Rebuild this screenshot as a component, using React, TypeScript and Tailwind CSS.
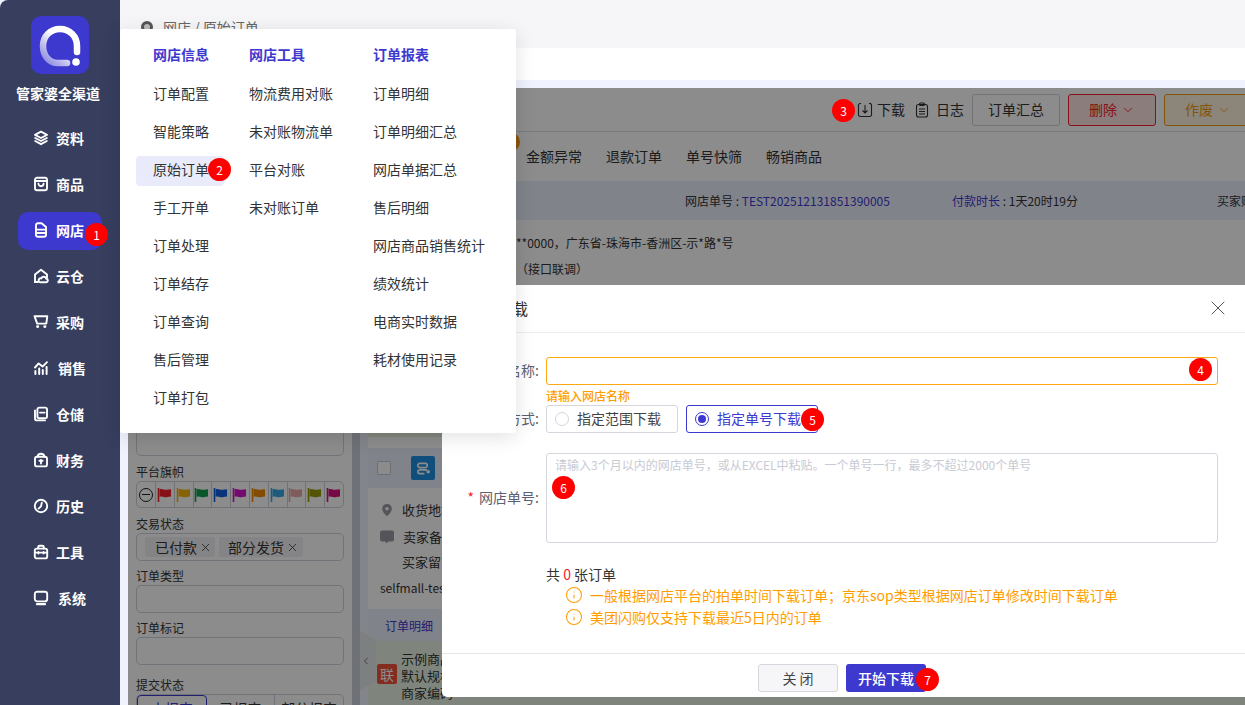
import type { ReactNode } from 'react';
import { ChevronDown, ChevronLeft, Info, X } from 'lucide-react';

const Glyph = ({ children }: { children: ReactNode }) => (
  <svg viewBox="0 0 16 16" className="h-4 w-4 shrink-0" fill="none" stroke="currentColor" strokeWidth="1.900" strokeLinecap="round" strokeLinejoin="round">
    {children}
  </svg>
);

const navItems: { label: string; gap: string; icon: ReactNode }[] = [
  { label: '资料', gap: 'gap-[7px]', icon: <path d="M8 1.600 14 4.800 8 8 2 4.800ZM2.200 8 8 11l5.800-3M2.200 11 8 14.200l5.800-3.200" /> },
  { label: '商品', gap: 'gap-[7px]', icon: <><rect x="2" y="1.800" width="12" height="12.400" rx="2" /><path d="M2 5h12M5.400 7.600a2.600 2.600 0 0 0 5.200 0" /></> },
  { label: '网店', gap: 'gap-[7px]', icon: <><path d="M3 3.200a2 2 0 0 1 2-2h3.600L13 5v7.800a2 2 0 0 1-2 2H5a2 2 0 0 1-2-2Z" /><path d="M3 7.600h10M3 11h10" /></> },
  { label: '云仓', gap: 'gap-[7px]', icon: <><path d="M2 14V6.600L8 1.800l6 4.800v3" /><path d="M2 14h3M7 14.200h6a1.700 1.700 0 0 0 .3-3.400 2.600 2.600 0 0 0-5-.4A1.900 1.900 0 0 0 7 14.200Z" /></> },
  { label: '采购', gap: 'gap-[7px]', icon: <><path d="M1.500 2.200h12.800l-1 7.400H4.200Z" /><path d="M4.400 12.600h.5M11.600 12.600h.5" strokeWidth="2.600" /></> },
  { label: '销售', gap: 'gap-[9px]', icon: <><path d="M2 7.500 5.600 3.400l4 3.200 4.400-4.400" /><path d="M2.400 14v-3M6.200 14V8.600M9.800 14v-4M13.600 14V7" strokeWidth="2" /></> },
  { label: '仓储', gap: 'gap-[7px]', icon: <><rect x="4.400" y="1.600" width="9.600" height="10.600" rx="1.800" /><path d="M2 4.400v8a2 2 0 0 0 2 2h8M7 6.600h4.600" /></> },
  { label: '财务', gap: 'gap-[7px]', icon: <><rect x="2" y="4.800" width="12" height="9.600" rx="2" /><path d="M4.600 4.600C4.800 2.600 6 1.800 8 1.800s3.200.8 3.400 2.800M8 8v3.600M6.400 8.800h3.200" /></> },
  { label: '历史', gap: 'gap-[7px]', icon: <><circle cx="8" cy="8" r="6.200" /><path d="M8.800 4.600 8 8.400l-2.400 2.200" /></> },
  { label: '工具', gap: 'gap-[7px]', icon: <><rect x="1.800" y="4.600" width="12.400" height="9.800" rx="2" /><path d="M5.200 4.400V3.200a1.400 1.400 0 0 1 1.400-1.400h2.800a1.400 1.400 0 0 1 1.400 1.400v1.200M1.800 8.600h12.400M5.400 8v1.600M10.600 8v1.600" /></> },
  { label: '系统', gap: 'gap-[9px]', icon: <><rect x="1.800" y="1.800" width="12.400" height="9.600" rx="2.400" /><path d="M4 14.200h8" strokeWidth="2.200" /></> },
];

const menuColumns = [
  { title: '网店信息', width: 'w-[96px]', rows: ['订单配置', '智能策略', '原始订单', '手工开单', '订单处理', '订单结存', '订单查询', '售后管理', '订单打包'] },
  { title: '网店工具', width: 'w-[124px]', rows: ['物流费用对账', '未对账物流单', '平台对账', '未对账订单'] },
  { title: '订单报表', width: 'w-[143px]', rows: ['订单明细', '订单明细汇总', '网店单据汇总', '售后明细', '网店商品销售统计', '绩效统计', '电商实时数据', '耗材使用记录'] },
];

const flagColors = ['#f5222d', '#f5b50a', '#12a150', '#0f5fe0', '#d311c9', '#f08a00', '#35a8e6', '#e8a8a8', '#9a9a0a', '#d6107f'];

const Badge = ({ n, className }: { n: number; className: string }) => (
  <span className={`absolute z-30 flex h-[23px] w-[23px] items-center justify-center rounded-full bg-[#fe0000] text-[12px] text-white ${className}`}>
    {n}
  </span>
);

function Flag({ color }: { color: string }) {
  return (
    <svg viewBox="0 0 16 16" className="h-4 w-4">
      <path d="M1.500 1v14" stroke={color} strokeWidth="1.600" />
      <path d="M2.500 2.200c3-1 5 1 7 .6 1.800-.3 3.200-.6 4.500-.6v7.400c-1.400 0-2.800.4-4.500.7-2 .3-4-1.600-7-.6Z" fill={color} />
    </svg>
  );
}

function Logo() {
  return (
    <div className="flex h-[58px] w-[58px] items-center justify-center rounded-[10px] bg-[#3d39cf]">
      <svg viewBox="0 0 58 58" className="h-[58px] w-[58px]" fill="none">
        <defs>
          <linearGradient id="ring" x1="46" y1="10" x2="14" y2="46" gradientUnits="userSpaceOnUse">
            <stop offset="0.45" stopColor="#ffffff" />
            <stop offset="1" stopColor="#8d8be0" />
          </linearGradient>
        </defs>
        <path d="M36 47H27C17.500 47 12 39 12 30c0-10 7.500-17 17-17s17 7 17 17v6" stroke="url(#ring)" strokeWidth="6.500" strokeLinecap="round" />
        <circle cx="45" cy="46" r="3.800" fill="#ffffff" />
      </svg>
    </div>
  );
}

function Sidebar() {
  return (
    <aside className="flex h-full w-[120px] shrink-0 flex-col items-center rounded-tl-lg bg-[#373e5e] pt-4 text-white">
      <Logo />
      <div className="mr-1 mt-[9px] h-5 text-[14px] font-bold leading-5">管家婆全渠道</div>
      <nav className="mt-[17px] flex w-[84px] flex-col gap-2">
        {navItems.map((item) => (
          <div
            key={item.label}
            className={`flex h-[38px] items-center rounded-[10px] pb-[2px] pl-[15px] text-[14px] font-bold ${item.gap} ${item.label === '网店' ? 'bg-[#3d39cf]' : ''}`}
          >
            <Glyph>{item.icon}</Glyph>
            <span>{item.label}</span>
          </div>
        ))}
      </nav>
    </aside>
  );
}

function FilterPanel() {
  const labelClass = 'h-[18px] text-[12px] leading-[18px] text-[#333]';
  const boxClass = 'h-7 rounded-[5px] border border-[#d0d2dc]';
  return (
    <section className="w-[224px] shrink-0 bg-white px-2">
      <div className="h-[368px] rounded-b-[5px] border border-[#d0d2dc]" />
      <div className={`mt-[7px] ${labelClass}`}>平台旗帜</div>
      <div className="flex h-[27px] rounded-[5px] border border-[#d0d2dc]">
        <div className="flex w-[19px] items-center justify-center border-r border-[#d0d2dc]">
          <span className="flex h-[14px] w-[14px] items-center justify-center rounded-full border border-[#222]">
            <span className="h-px w-[8px] bg-[#222]" />
          </span>
        </div>
        {flagColors.map((color) => (
          <div key={color} className="flex flex-1 items-center justify-center border-r border-[#d0d2dc] last:border-r-0">
            <Flag color={color} />
          </div>
        ))}
      </div>
      <div className={`mt-[7px] ${labelClass}`}>交易状态</div>
      <div className={`flex items-center gap-1 pl-2 text-[14px] text-[#333] ${boxClass}`}>
        <span className="flex h-5 w-[70px] items-center gap-[2px] rounded-[2px] bg-[#f0f1f4] pl-[10px]">已付款<X className="h-[13px] w-[13px]" strokeWidth={1.500} /></span>
        <span className="flex h-5 w-[84px] items-center gap-[2px] rounded-[2px] bg-[#f0f1f4] pl-[9px]">部分发货<X className="h-[13px] w-[13px]" strokeWidth={1.500} /></span>
      </div>
      <div className={`mt-[6px] ${labelClass}`}>订单类型</div>
      <div className={boxClass} />
      <div className={`mt-[6px] ${labelClass}`}>订单标记</div>
      <div className={boxClass} />
      <div className={`mt-[11px] ${labelClass}`}>提交状态</div>
      <div className="flex h-7 rounded-[5px] border border-[#d0d2dc] text-[14px] leading-5 text-[#333]">
        <span className="flex w-[70px] justify-center rounded-[4px] border border-[#3d39cf] pt-[2px] text-[#3d39cf]">未报完</span>
        <span className="flex w-[68px] justify-center border-r border-[#d0d2dc] pt-[3px]">已报完</span>
        <span className="flex flex-1 justify-center pt-[3px]">部分报完</span>
      </div>
    </section>
  );
}

function OrdersPanel() {
  return (
    <section className="min-w-0 flex-1 overflow-hidden bg-white text-[#333]">
      <div className="flex h-11 items-center whitespace-nowrap border-b border-[#dfe1e6] pl-[489px] text-[14px]">
        <svg viewBox="0 0 16 16" className="h-4 w-4 shrink-0 text-[#333]" fill="none" stroke="currentColor" strokeWidth="1.100">
          <path d="M4 1.500H3a1.800 1.800 0 0 0-1.500 1.800v9.400A1.800 1.800 0 0 0 3.300 14.500h9.400a1.800 1.800 0 0 0 1.800-1.800V3.300A1.800 1.800 0 0 0 12 1.500M8 3v8M5.500 8.500 8 11l2.500-2.500" />
        </svg>
        <span className="ml-[4px] shrink-0">下载</span>
        <svg viewBox="0 0 16 16" className="ml-[9px] h-4 w-4 shrink-0" fill="none" stroke="currentColor" strokeWidth="1.100">
          <rect x="2.500" y="2.500" width="11" height="12.500" rx="2" />
          <rect x="5.500" y="1" width="5" height="2.500" rx="1" />
          <path d="M5 7h6M5 9.500h6M5 12h6" />
        </svg>
        <span className="ml-[6px] shrink-0">日志</span>
        <span className="ml-2 flex h-8 w-[88px] shrink-0 items-center justify-center rounded-[3px] border border-[#d0d2dc]">订单汇总</span>
        <span className="ml-2 flex h-8 w-[88px] shrink-0 items-center justify-center gap-1 rounded-[3px] border border-[#f5222d] bg-[#ffe3e3] text-[#f5222d]">
          删除<ChevronDown className="h-[14px] w-[14px]" strokeWidth={1.600} />
        </span>
        <span className="ml-2 flex h-8 w-[88px] shrink-0 items-center justify-center gap-1 rounded-[3px] border border-[#f59a0e] bg-[#fff3dd] text-[#f59a0e]">
          作废<ChevronDown className="h-[14px] w-[14px]" strokeWidth={1.600} />
        </span>
      </div>
      <div className="relative flex h-[49px] items-center gap-6 pl-[158px] text-[14px]">
        <span className="absolute left-[132px] top-0 h-5 w-5 rounded-full bg-[#f59a0e]" />
        <span>金额异常</span>
        <span>退款订单</span>
        <span>单号快筛</span>
        <span>畅销商品</span>
      </div>
      <div className="flex h-[39px] items-center whitespace-nowrap bg-[#eceefb] pl-[317px] text-[12px]">
        <span className="w-[267px] shrink-0">网店单号 : <span className="text-[#3d39cf]">TEST202512131851390005</span></span>
        <span className="w-[265px] shrink-0"><span className="text-[#3d39cf]">付款时长</span> : 1天20时19分</span>
        <span className="shrink-0">买家账号</span>
      </div>
      <div className="h-[207px] whitespace-nowrap pl-[148px] text-[12px]">
        <div className="pt-[14px] leading-[18px]">**0000，广东省-珠海市-香洲区-示*路*号</div>
        <div className="mt-2 leading-[18px]">（接口联调）</div>
      </div>
      <div className="h-[10px] bg-[#e8f3e2]" />
      <div className="h-[11px]" />
      <div className="flex h-10 items-center gap-5 bg-[#eceefb] pl-[9px]">
        <span className="h-[14px] w-[14px] rounded-[2px] border border-[#c8cad4] bg-white" />
        <span className="flex h-6 w-6 items-center justify-center rounded-[2px] bg-[#1e8fe0] text-white">
          <svg viewBox="0 0 16 16" className="h-[15px] w-[15px]" fill="none" stroke="currentColor" strokeWidth="1.800">
            <rect x="2" y="2.500" width="10" height="4.500" rx="2" />
            <path d="M12 9.500H4a2 2 0 0 0 0 4h5" />
            <circle cx="13" cy="11.500" r="1" fill="currentColor" />
          </svg>
        </span>
      </div>
      <div className="whitespace-nowrap text-[13px]">
        <div className="mt-[12px] flex h-[20px] items-center gap-2 pl-3">
          <svg viewBox="0 0 16 16" className="h-[14px] w-[14px] text-[#9a9aa5]" fill="currentColor"><path d="M8 1a5.500 5.500 0 0 0-5.500 5.500C2.500 10.500 8 15 8 15s5.500-4.500 5.500-8.500A5.500 5.500 0 0 0 8 1Zm0 7.500a2 2 0 1 1 0-4 2 2 0 0 1 0 4Z" /></svg>
          <span>收货地址</span>
        </div>
        <div className="mt-[7px] flex h-[20px] items-center gap-2 pl-[11px]">
          <svg viewBox="0 0 16 16" className="h-4 w-4 text-[#9a9aa5]" fill="currentColor"><path d="M3 1.500h10a2 2 0 0 1 2 2v7a2 2 0 0 1-2 2H9l-1 2-2-2H3a2 2 0 0 1-2-2v-7a2 2 0 0 1 2-2Z" /></svg>
          <span>卖家备注</span>
        </div>
        <div className="mt-[5px] h-[20px] pl-[34px] leading-[20px]">买家留言</div>
        <div className="mt-[6px] h-[20px] pl-[12px] text-[12px] leading-[20px]">selfmall-test</div>
      </div>
      <div className="mt-[11px] h-[32px] bg-[#eceefb] pl-[17px] pt-[7px] text-[12px] leading-5 text-[#3d39cf]">订单明细</div>
      <div className="flex h-[65px] gap-1 whitespace-nowrap bg-[#e8f3e2] pl-[9px] text-[13px]">
        <span className="mt-[23px] flex h-5 w-5 items-center justify-center rounded-[2px] bg-[#f0503a] text-[14px] text-white">联</span>
        <div className="pt-[9px] leading-[17px]">
          <div>示例商品</div>
          <div>默认规格</div>
          <div>商家编码</div>
        </div>
      </div>
    </section>
  );
}

function DownloadDialog() {
  const labelClass = 'w-[97px] shrink-0 pb-[2px] text-right text-[14px] text-[#5c6070]';
  return (
    <div className="absolute left-[442px] top-[285px] z-10 flex h-[412px] w-[803px] flex-col rounded-l-[5px] bg-white text-[14px] text-[#333]">
      <div className="flex h-[48px] shrink-0 items-center justify-between border-b border-[#ebecf0] pb-[2px] pl-[22px] pr-[15px]">
        <span className="text-[16px] text-[#333]">订单下载</span>
        <X className="h-6 w-6 text-[#555]" strokeWidth={1} />
      </div>
      <div className="flex-1 pt-6">
        <div className="flex h-7 items-center gap-[7px]">
          <span className={labelClass}>网店名称:</span>
          <input className="h-7 w-[672px] rounded-[3px] border border-[#ffa815] outline-none" />
        </div>
        <div className="ml-[104px] h-5 text-[12px] font-medium leading-[21px] text-[#ff9d00]">请输入网店名称</div>
        <div className="flex h-7 items-center gap-[7px]">
          <span className={labelClass}>下载方式:</span>
          <div className="flex gap-2">
            <span className="flex h-7 w-[132px] items-center gap-2 rounded-[3px] border border-[#d5d6de] pb-[2px] pl-2 text-[#444]">
              <span className="mt-[2px] h-[14px] w-[14px] rounded-full border border-[#d5d6de]" />
              指定范围下载
            </span>
            <span className="flex h-7 w-[132px] items-center gap-2 rounded-[3px] border border-[#3d39cf] pb-[2px] pl-2 text-[#3d39cf]">
              <span className="mt-[2px] flex h-[14px] w-[14px] items-center justify-center rounded-full border border-[#3d39cf]">
                <span className="h-2 w-2 rounded-full bg-[#3d39cf]" />
              </span>
              指定单号下载
            </span>
          </div>
        </div>
        <div className="mt-5 flex h-[90px] items-center gap-[7px]">
          <span className={labelClass}><span className="mr-[5px] text-[#f5222d]">*</span>网店单号:</span>
          <textarea
            className="h-[90px] w-[672px] resize-none rounded-[3px] border border-[#d5d6de] px-2 py-[2px] text-[12px] outline-none placeholder:text-[#c8cad4]"
            placeholder="请输入3个月以内的网店单号，或从EXCEL中粘贴。一个单号一行，最多不超过2000个单号"
          />
        </div>
        <div className="ml-[104px] mt-[21px] h-5 leading-5">共 <span className="text-[#f5222d]">0</span> 张订单</div>
        <div className="ml-[123px] text-[#ff9d00]">
          <div className="flex h-[22px] items-center gap-[7px]"><Info className="h-[18px] w-[18px]" strokeWidth={1.400} />一般根据网店平台的拍单时间下载订单；京东sop类型根据网店订单修改时间下载订单</div>
          <div className="flex h-[22px] items-center gap-[7px]"><Info className="h-[18px] w-[18px]" strokeWidth={1.400} />美团闪购仅支持下载最近5日内的订单</div>
        </div>
      </div>
      <div className="flex h-[44px] shrink-0 gap-2 border-t border-[#e4e5ea] pl-[316px] pt-[10px]">
        <button className="h-7 w-20 rounded-[3px] border border-[#d5d6de] bg-[#f6f6f9] text-[14px] text-[#444]">关 闭</button>
        <button className="h-7 w-20 rounded-[3px] bg-[#3d39cf] text-[14px] font-medium text-white">开始下载</button>
      </div>
    </div>
  );
}

function ShopMenu() {
  return (
    <div className="absolute left-[120px] top-[29px] z-20 flex h-[404px] w-[396px] rounded-[3px] bg-white pl-4 pt-[17px] text-[14px] text-[#333] shadow-[0_4px_20px_rgba(0,0,0,0.12)]">
      {menuColumns.map((col) => (
        <div key={col.title} className={col.width}>
          <div className="flex h-5 items-center pb-[3px] pl-[17px] font-bold text-[#3d39cf]">{col.title}</div>
          <div className="mt-[14px] flex flex-col gap-2">
            {col.rows.map((row) => (
              <div key={row} className={`flex h-[30px] items-center whitespace-nowrap rounded-[4px] pb-1 pl-[17px] ${row === '原始订单' ? 'w-[88px] bg-[#e9ebfb]' : ''}`}>
                {row}
              </div>
            ))}
          </div>
        </div>
      ))}
    </div>
  );
}

export default function App() {
  return (
    <div className="relative flex h-[705px] w-[1245px] overflow-hidden bg-[#f0f2ff] [font-family:'Noto_Sans_CJK_SC','Noto_Sans',sans-serif]">
      <Sidebar />
      <main className="flex min-w-0 flex-1 flex-col">
        <header className="flex h-12 shrink-0 items-center gap-[10px] bg-[#f6f6f8] pl-[21px] pt-[6px] text-[14px] text-[#666]">
          <span className="h-3 w-3 rounded-full border-[3px] border-[#555] bg-[#bbb]" />
          <span>网店 / 原始订单</span>
        </header>
        <div className="h-8 shrink-0 bg-white" />
        <div className="h-2 shrink-0" />
        <div className="relative flex min-h-0 flex-1 pl-2">
          <FilterPanel />
          <div className="w-2 shrink-0 bg-[#c9ced8]" />
          <div className="w-2 shrink-0" />
          <OrdersPanel />
          <div className="absolute left-[240px] top-[543px] flex h-[59px] w-4 items-center justify-start bg-[#e6e8ec] [clip-path:polygon(0_0,100%_14%,100%_86%,0_100%)]">
            <ChevronLeft className="h-3 w-3 text-[#777]" />
          </div>
          <div className="absolute inset-0 left-2 bg-black/45" />
        </div>
      </main>
      <ShopMenu />
      <DownloadDialog />
      <Badge n={1} className="left-[85px] top-[223px]" />
      <Badge n={2} className="left-[208px] top-[158px]" />
      <Badge n={3} className="left-[832px] top-[99px]" />
      <Badge n={4} className="left-[1189px] top-[358px]" />
      <Badge n={5} className="left-[801px] top-[408px]" />
      <Badge n={6} className="left-[552px] top-[476px]" />
      <Badge n={7} className="left-[916px] top-[668px]" />
    </div>
  );
}
